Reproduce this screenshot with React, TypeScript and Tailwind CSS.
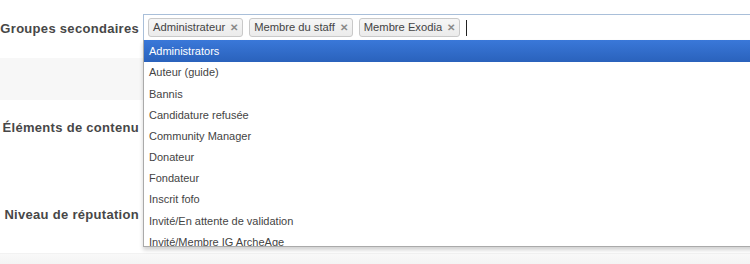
const tags = ['Administrateur', 'Membre du staff', 'Membre Exodia']

const options = [
  'Administrators',
  'Auteur (guide)',
  'Bannis',
  'Candidature refusée',
  'Community Manager',
  'Donateur',
  'Fondateur',
  'Inscrit fofo',
  'Invité/En attente de validation',
  'Invité/Membre IG ArcheAge',
]

const Label = ({ children }: { children: string }) => (
  <div className="w-[140px] shrink-0 pr-[1px] text-right text-[13px] font-bold tracking-[0.3px] text-[#474747]">
    {children}
  </div>
)

export default function App() {
  return (
    <div className="relative h-[264px] w-[750px] overflow-hidden bg-white font-['Liberation_Sans',Arial,sans-serif]">
      {/* ROWS */}
      <div className="flex h-[58px] items-center">
        <Label>Groupes secondaires</Label>
      </div>
      <div className="h-[42px] bg-[#f7f7f7]" />
      <div className="flex h-[56px] items-center">
        <Label>Éléments de contenu</Label>
      </div>
      <div className="h-[30px]" />
      <div className="flex h-[57px] items-center">
        <Label>Niveau de réputation</Label>
      </div>
      <div className="h-[10px]" />
      <div className="h-[11px] border-t border-[#f2f2f2] bg-gradient-to-b from-[#f9f9f9] to-[#f4f4f4]" />

      {/* CHOSEN INPUT */}
      <div className="absolute left-[143px] top-[14px] w-[620px]">
        <div className="flex h-[26px] items-center gap-[6px] border border-[#a9bfd9] border-b-0 bg-white pl-[4px]">
          {tags.map((t) => (
            <span
              key={t}
              className="flex h-[19px] items-center gap-[5px] rounded-[3px] border border-[#c9c9c9] bg-gradient-to-b from-[#f6f6f6] to-[#ebebeb] px-[4px] text-[11.2px] text-[#444]"
            >
              {t}
              <span className="text-[10px] font-bold text-[#8a8a8a]">✕</span>
            </span>
          ))}
          <span className="h-[16px] w-[1px] bg-[#222]" />
        </div>

        {/* DROPDOWN */}
        <div className="h-[207px] overflow-hidden border border-t-0 border-[#aaa] bg-white shadow-[0_3px_4px_rgba(0,0,0,0.18)]">
          {options.map((o, i) => (
            <div
              key={o}
              className={
                i === 0
                  ? 'flex h-[22px] items-center bg-gradient-to-b from-[#3a78d9] to-[#2a62bc] px-[5px] text-[11px] text-white'
                  : 'flex h-[21.2px] items-center px-[5px] text-[11px] text-[#444]'
              }
            >
              {o}
            </div>
          ))}
        </div>
      </div>
    </div>
  )
}
